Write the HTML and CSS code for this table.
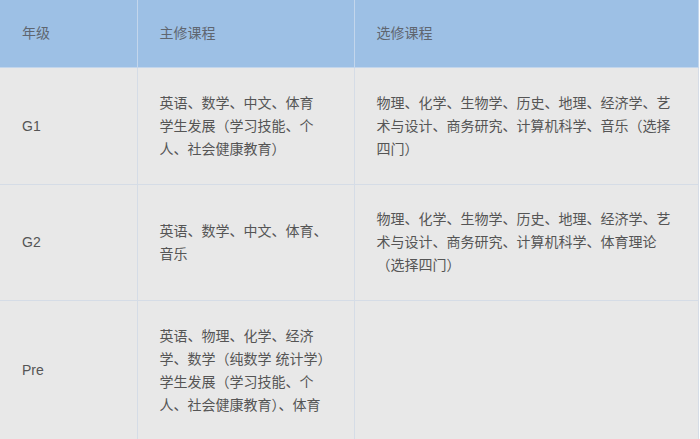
FILE: index.html
```html
<!DOCTYPE html>
<html lang="zh-CN">
<head>
<meta charset="utf-8">
<link rel="stylesheet" href="styles.css">
</head>
<body>
<table class="courses">
  <colgroup>
    <col class="c-grade">
    <col class="c-main">
    <col class="c-elective">
  </colgroup>
  <thead>
    <tr>
      <th>年级</th>
      <th>主修课程</th>
      <th>选修课程</th>
    </tr>
  </thead>
  <tbody>
    <tr class="r1">
      <td>G1</td>
      <td>英语、数学、中文、体育<br>学生发展（学习技能、个<br>人、社会健康教育）</td>
      <td>物理、化学、生物学、历史、地理、经济学、艺<br>术与设计、商务研究、计算机科学、音乐（选择<br>四门）</td>
    </tr>
    <tr class="r2">
      <td>G2</td>
      <td>英语、数学、中文、体育、<br>音乐</td>
      <td>物理、化学、生物学、历史、地理、经济学、艺<br>术与设计、商务研究、计算机科学、体育理论<br>（选择四门）</td>
    </tr>
    <tr class="r3">
      <td>Pre</td>
      <td>英语、物理、化学、经济<br>学、数学（纯数学 统计学）<br>学生发展（学习技能、个<br>人、社会健康教育）、体育</td>
      <td></td>
    </tr>
  </tbody>
</table>
</body>
</html>
```

FILE: styles.css
```css
html, body {
  margin: 0;
  padding: 0;
  background: #ffffff;
}

body {
  font-family: "Liberation Sans", "Noto Sans CJK SC", sans-serif;
  font-size: 14px;
  color: #555555;
  overflow: hidden;
}

.courses {
  border-collapse: collapse;
  table-layout: fixed;
  width: 698px;
}

.c-grade { width: 137px; }
.c-main { width: 217px; }
.c-elective { width: 344px; }

.courses th,
.courses td {
  border: 1px solid #d5dce6;
  text-align: left;
  vertical-align: middle;
  padding: 0 10px 0 22px;
  line-height: 23px;
  white-space: nowrap;
  font-weight: normal;
}

.courses th {
  background: #9dc0e5;
  color: #5f6670;
  height: 67px;
  border-top: none;
  border-left-color: #c3d6ec;
  border-right-color: #c3d6ec;
  border-bottom-color: #c3d6ec;
}

.courses th:first-child,
.courses td:first-child {
  border-left: none;
}

.courses td {
  background: #e8e8e8;
}

.r1 td { height: 116px; }
.r2 td { height: 115px; }
.r3 td { height: 139px; }
```
